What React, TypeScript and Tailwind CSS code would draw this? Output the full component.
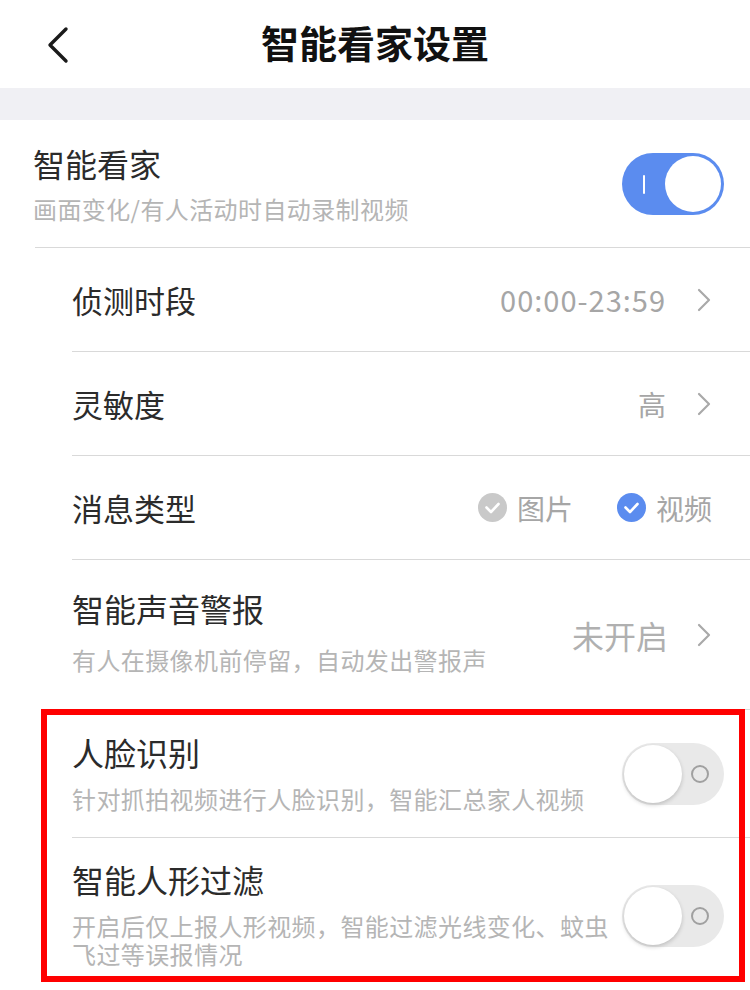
import React from 'react';

function Chevron() {
  return (
    <svg width="16" height="26" viewBox="0 0 16 26" className="shrink-0">
      <polyline points="3,3 13,13 3,23" fill="none" stroke="#a9a9a9" strokeWidth="2.2" strokeLinecap="round" strokeLinejoin="round" />
    </svg>
  );
}

function Check({ on }: { on: boolean }) {
  return (
    <svg width="29" height="29" viewBox="0 0 29 29" className="shrink-0">
      <circle cx="14.5" cy="14.5" r="14.5" fill={on ? '#5b8cef' : '#c9c9c9'} />
      <polyline points="8.5,14.5 13,19 20.5,11" fill="none" stroke="#fff" strokeWidth="2.6" strokeLinecap="round" strokeLinejoin="round" />
    </svg>
  );
}

function Toggle({ on }: { on: boolean }) {
  if (on) {
    return (
      <div className="relative w-[102px] h-[62px] rounded-full bg-[#5b8cef] shrink-0">
        <div className="absolute left-[21px] top-[22px] w-[2px] h-[19px] bg-white rounded" />
        <div className="absolute right-[3px] top-[3px] w-[56px] h-[56px] rounded-full bg-white" />
      </div>
    );
  }
  return (
    <div className="relative w-[102px] h-[62px] rounded-full bg-[#e9e9e9] shrink-0">
      <div className="absolute right-[15px] top-[22px] w-[18px] h-[18px] rounded-full border-2 border-[#a0a0a0]" />
      <div className="absolute left-[2px] top-[2px] w-[58px] h-[58px] rounded-full bg-white shadow-[0_2px_4px_rgba(0,0,0,0.18)]" />
    </div>
  );
}

function Divider() {
  return <div className="h-px bg-[#d9d9d9]" />;
}

export default function App() {
  return (
    <div className="w-[750px] h-[990px] overflow-hidden bg-white font-['Noto_Sans_CJK_SC',sans-serif] text-[#2b2b2b]">
      {/* Header */}
      <header className="relative h-[88px] flex items-center justify-center">
        <svg width="28" height="40" viewBox="0 0 28 40" className="absolute left-[43px] top-[25px]">
          <polyline points="23,4 7,20 23,36" fill="none" stroke="#1a1a1a" strokeWidth="3.4" strokeLinecap="round" strokeLinejoin="round" />
        </svg>
        <h1 className="text-[38px] font-bold text-[#111] leading-none -mt-[4px]">智能看家设置</h1>
      </header>
      <div className="h-[32px] bg-[#f0f0f4]" />

      {/* 智能看家 */}
      <div className="h-[127px] flex items-center pl-[33px] pr-[26px]">
        <div className="flex-1 flex flex-col gap-[10px]">
          <div className="text-[32px] leading-[40px]">智能看家</div>
          <div className="text-[24px] leading-[32px] tracking-[0.4px] text-[#b5b5b5]">画面变化/有人活动时自动录制视频</div>
        </div>
        <Toggle on />
      </div>
      <div className="ml-[35px]">
        <Divider />
      </div>

      <div className="ml-[72px]">
        <div className="h-[103px] flex items-center pr-[38px]">
          <div className="flex-1 text-[31px] leading-[40px]">侦测时段</div>
          <span className="text-[29px] tracking-[1px] text-[#a6a6a6] mr-[30px]">00:00-23:59</span>
          <Chevron />
        </div>
        <Divider />
        <div className="h-[103px] flex items-center pr-[38px]">
          <div className="flex-1 text-[31px] leading-[40px]">灵敏度</div>
          <span className="text-[28px] text-[#a6a6a6] mr-[30px]">高</span>
          <Chevron />
        </div>
        <Divider />
        <div className="h-[103px] flex items-center pr-[38px]">
          <div className="flex-1 text-[31px] leading-[40px]">消息类型</div>
          <div className="flex items-center gap-[10px] mr-[44px]">
            <Check on={false} />
            <span className="text-[28px] text-[#a6a6a6]">图片</span>
          </div>
          <div className="flex items-center gap-[10px]">
            <Check on />
            <span className="text-[28px] text-[#a6a6a6]">视频</span>
          </div>
        </div>
        <Divider />
        <div className="h-[149px] flex items-center pr-[38px]">
          <div className="flex-1 flex flex-col gap-[16px] -mt-[6px]">
            <div className="text-[32px] leading-[40px]">智能声音警报</div>
            <div className="text-[24px] leading-[32px] tracking-[0.4px] text-[#b5b5b5]">有人在摄像机前停留，自动发出警报声</div>
          </div>
          <span className="text-[32px] text-[#b0b0b0] mr-[28px]">未开启</span>
          <Chevron />
        </div>
        <Divider />

        <div className="relative">
          <div className="h-[127px] flex items-center pr-[26px]">
            <div className="flex-1 flex flex-col gap-[11px]">
              <div className="text-[32px] leading-[40px]">人脸识别</div>
              <div className="text-[24px] leading-[32px] tracking-[0.4px] text-[#b5b5b5]">针对抓拍视频进行人脸识别，智能汇总家人视频</div>
            </div>
            <Toggle on={false} />
          </div>
          <Divider />
          <div className="flex pr-[26px] pt-[21px]">
            <div className="w-[542px] flex flex-col gap-[13px]">
              <div className="text-[32px] leading-[40px]">智能人形过滤</div>
              <div className="text-[24px] leading-[28px] tracking-[0.4px] text-[#b5b5b5]">开启后仅上报人形视频，智能过滤光线变化、蚊虫飞过等误报情况</div>
            </div>
            <div className="flex-1 flex justify-end pt-[26px]">
              <Toggle on={false} />
            </div>
          </div>

          {/* red annotation frame */}
          <div className="absolute -left-[31px] right-[5px] -top-[1px] h-[273px] border-[6px] border-[#ff0000] pointer-events-none" />
        </div>
      </div>
    </div>
  );
}
